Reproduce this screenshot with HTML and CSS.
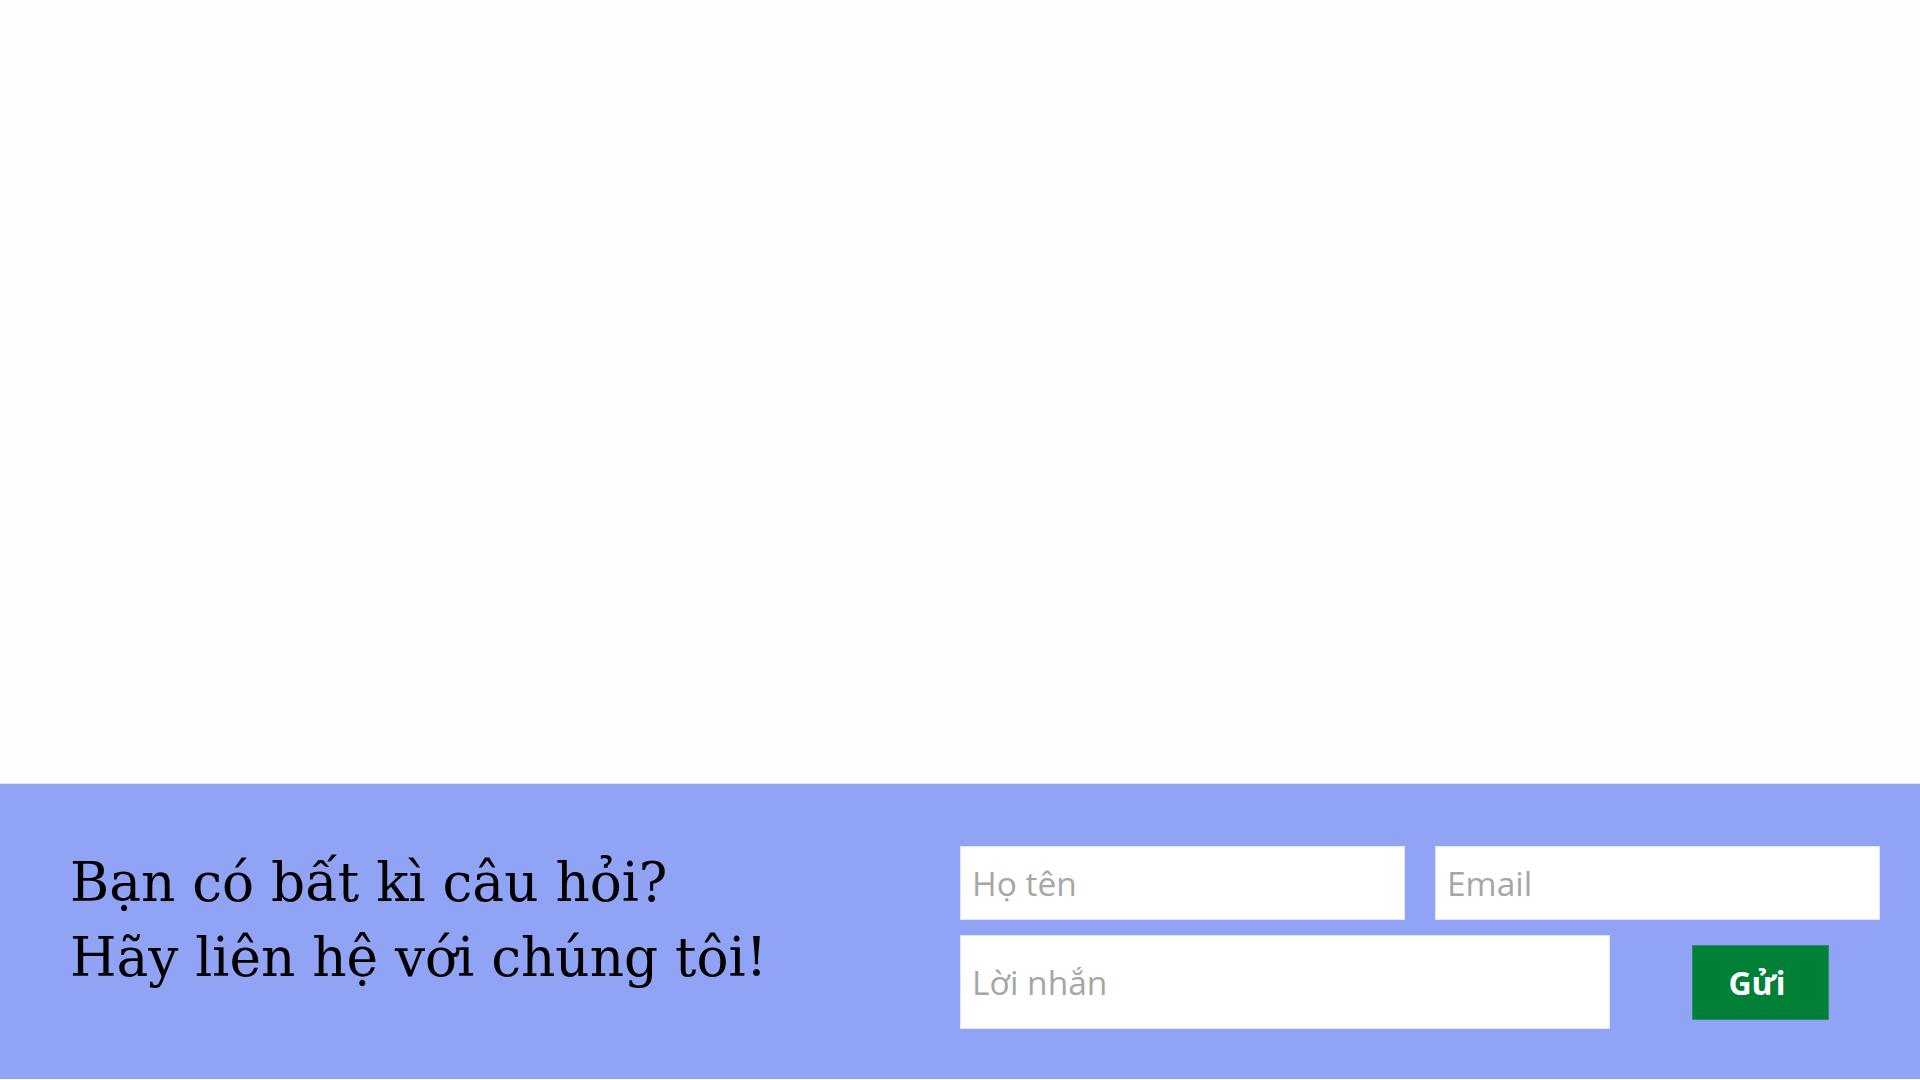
FILE: index.html
```html
<!DOCTYPE html>
<html lang="vi">
<head>
<meta charset="utf-8">
<title>Liên hệ</title>
<link rel="stylesheet" href="styles.css">
</head>
<body>
<main class="hero"></main>
<footer class="contact">
  <div class="contact-text">
    <p class="line">Bạn có bất kì câu hỏi?</p>
    <p class="line">Hãy liên hệ với chúng tôi!</p>
  </div>
  <form class="contact-form">
    <div class="row">
      <input class="field field-half" type="text" placeholder="Họ tên">
      <input class="field field-half" type="email" placeholder="Email">
    </div>
    <div class="row row-bottom">
      <textarea class="field field-message" placeholder="Lời nhắn"></textarea>
      <button class="send" type="button">Gửi</button>
    </div>
  </form>
</footer>
</body>
</html>
```

FILE: styles.css
```css
html, body {
  margin: 0;
  padding: 0;
  background: #fefefe;
}

.hero {
  display: block;
  height: 783px;
  border-bottom: 1px solid #e4e8f6;
}

.contact {
  display: flex;
  height: 295px;
  background: #90a3f4;
  box-sizing: border-box;
  padding-top: 62px;
}

.contact-text {
  width: 960px;
  box-sizing: border-box;
  padding-left: 70px;
}

.line {
  margin: 0;
  font-family: "DejaVu Serif", serif;
  font-size: 53.3px;
  line-height: 75px;
  color: #000;
  white-space: nowrap;
}

.contact-form {
  display: flex;
  flex-direction: column;
  gap: 15px;
  width: 920px;
}

.row {
  display: flex;
  gap: 30px;
}

.row-bottom {
  align-items: center;
  gap: 0;
}

.field {
  box-sizing: border-box;
  border: 1px solid #dfe5fc;
  background: #fff;
  border-radius: 0;
  font-family: "Open Sans", sans-serif;
  font-size: 33.5px;
  color: #333;
  padding: 0 11px;
  outline: none;
  margin: 0;
}

.field::placeholder {
  color: #a6a6a6;
  opacity: 1;
}

.field-half {
  width: 445px;
  height: 74px;
}

.field-message {
  width: 650px;
  height: 94px;
  resize: none;
  padding-top: 26px;
  line-height: 40px;
  overflow: hidden;
}

.send {
  margin-left: 82px;
  width: 137px;
  height: 75px;
  background: #008037;
  border: 1px solid #2a8f6a;
  color: #fff;
  font-family: "Open Sans", sans-serif;
  font-weight: 700;
  font-size: 32px;
  padding: 0 7px 0 0;
  cursor: pointer;
}
```
